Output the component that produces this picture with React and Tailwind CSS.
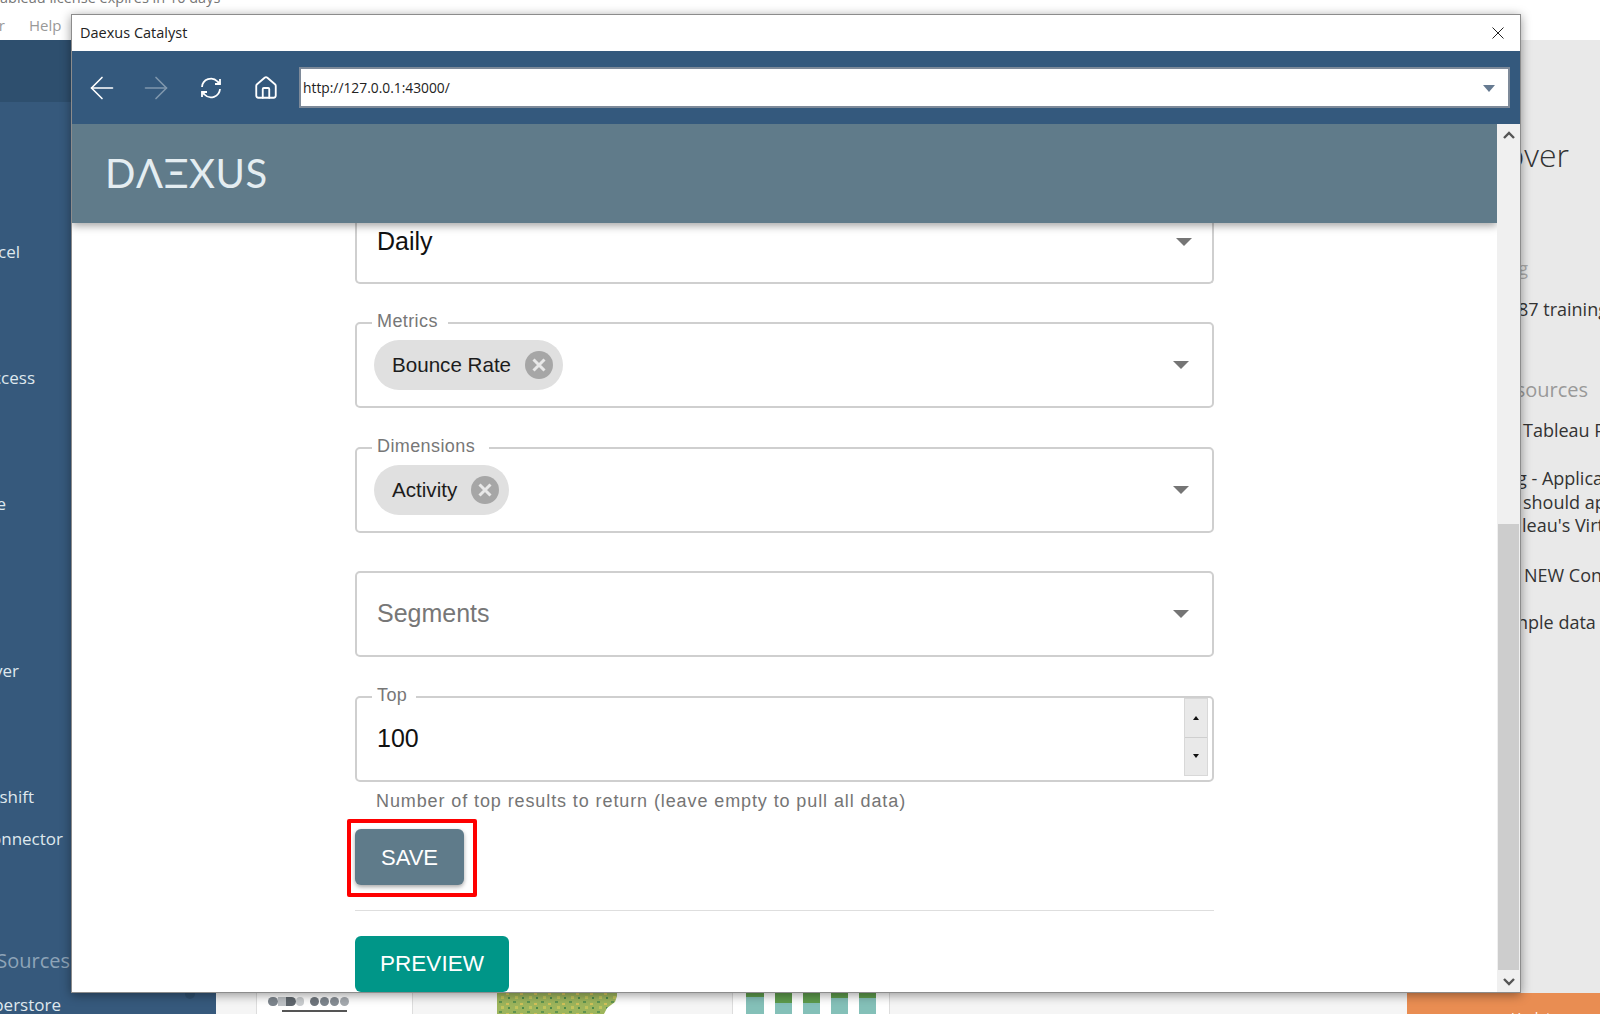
import { ArrowLeft, ArrowRight, House } from "lucide-react";

function Caret() {
  return (
    <svg width="16" height="8" viewBox="0 0 16 8">
      <path d="M0 0h16L8 8z" fill="#757575" />
    </svg>
  );
}

function Chip({ label }) {
  return (
    <div className="flex h-[50px] items-center rounded-full bg-[#e0e0e0] pl-[18px] pr-[10px] text-[20.6px] text-[#1c1c1c]">
      <span>{label}</span>
      <span className="ml-[14px] flex h-[28px] w-[28px] items-center justify-center rounded-full bg-[#a6a6a6]">
        <svg width="16" height="16" viewBox="0 0 16 16">
          <path d="M2.5 2.5l11 11M13.5 2.5l-11 11" stroke="#e8e8e8" strokeWidth="3" />
        </svg>
      </span>
    </div>
  );
}

function Field({ label, children, labelWidth, className }) {
  return (
    <div className={`relative flex h-[86px] items-center rounded-[5px] border-2 border-[#cfcfcf] pl-[17px] ${className}`}>
      {label && (
        <span className={`absolute left-[15px] top-[-14px] bg-white pl-[5px] text-[18px] leading-[22px] tracking-[0.4px] text-[#777] ${labelWidth}`}>
          {label}
        </span>
      )}
      {children}
    </div>
  );
}

function Backdrop() {
  return (
    <div className="absolute inset-0 overflow-hidden whitespace-nowrap bg-white font-['Open_Sans',sans-serif]">
      {/* top strip */}
      <p className="absolute left-[-8px] top-[-13px] text-[14.5px] text-[#777]">Tableau license expires in 10 days</p>
      <span className="absolute left-[-40px] top-[14px] text-[15px] text-[#999]">Server</span>
      <span className="absolute left-[29px] top-[14px] text-[15px] text-[#999]">Help</span>

      {/* left sidebar */}
      <div className="absolute bottom-0 left-0 top-[40px] w-[216px] bg-[#36597c]">
        <div className="h-[62px] bg-[#2e4f6e]" />
      </div>
      <div className="absolute left-0 top-[40px] h-[974px] w-[216px] text-[17px] text-[#dfe8ee]">
        <span className="absolute right-[196px] top-[199px]">Excel</span>
        <span className="absolute right-[181px] top-[325px]">Access</span>
        <span className="absolute right-[210px] top-[451px]">e</span>
        <span className="absolute right-[197px] top-[618px]">Server</span>
        <span className="absolute right-[182px] top-[744px]">Redshift</span>
        <span className="absolute right-[153px] top-[786px]">Connector</span>
        <span className="absolute right-[146px] top-[906px] text-[20px] text-[#8ea4b8]">Data Sources</span>
        <span className="absolute right-[155px] top-[952px]">Superstore</span>
        <span className="absolute left-[185px] top-[949px] h-[10px] w-[10px] rounded-full bg-[#2e4f6e]" />
      </div>

      {/* right panel */}
      <div className="absolute bottom-0 left-[216px] right-0 top-[40px] bg-[#f5f5f5]" />
      <div className="absolute bottom-0 left-[1470px] right-0 top-[40px] bg-[#e9e9e9] text-[18px] text-[#333]">
        <span className="absolute right-[31px] top-[91px] text-[32px] font-light">Discover</span>
        <span className="absolute right-[72px] top-[215px] text-[#aaa]">Training</span>
        <span className="absolute left-[48px] top-[256px]">87 training videos</span>
        <span className="absolute right-[12px] top-[335px] text-[20px] text-[#999]">Resources</span>
        <span className="absolute left-[53px] top-[377px]">Tableau Public</span>
        <span className="absolute left-[47px] top-[425px]">g - Application</span>
        <span className="absolute left-[53px] top-[449px]">should apply</span>
        <span className="absolute left-[52px] top-[472px]">leau's Virtual</span>
        <span className="absolute left-[54px] top-[522px]">NEW Connector</span>
        <span className="absolute left-[47px] top-[569px]">nple data</span>
      </div>

      {/* dashboard thumbnails under the window */}
      <div className="absolute left-[256px] top-[980px] h-[40px] w-[157px] border-x border-[#ddd] bg-white">
        <div className="mt-[17px] flex items-center pl-[11px]">
          <span className="h-[9px] w-[10px] rounded-full bg-[#7d858d]" />
          <span className="h-[9px] w-[8px] bg-[#bdc1c5]" />
          <span className="h-[9px] w-[10px] rounded-r-full bg-[#5f666d]" />
          <span className="h-[9px] w-[8px] rounded-full bg-[#c9cccf]" />
          <span className="ml-[6px] h-[9px] w-[9px] rounded-full bg-[#6f767d]" />
          <span className="ml-[1px] h-[9px] w-[9px] rounded-full bg-[#7d858d]" />
          <span className="ml-[1px] h-[9px] w-[9px] rounded-full bg-[#868d94]" />
          <span className="ml-[1px] h-[9px] w-[9px] rounded-full bg-[#a5aaaf]" />
        </div>
        <div className="ml-[25px] mt-[4px] h-[2px] w-[65px] bg-[#555]" />
      </div>
      <div className="absolute left-[497px] top-[980px] h-[40px] w-[153px] bg-white">
        <svg width="120" height="40" viewBox="0 0 120 40">
          <defs>
            <pattern id="speckle" width="14" height="10" patternUnits="userSpaceOnUse">
              <rect width="14" height="10" fill="#9db55c" />
              <rect x="2" y="1" width="3" height="2" fill="#5f9450" />
              <rect x="9" y="3" width="3" height="2" fill="#d3c25a" />
              <rect x="4" y="6" width="3" height="3" fill="#c2c45c" />
              <rect x="11" y="7" width="2" height="2" fill="#4f8a4a" />
            </pattern>
          </defs>
          <path d="M0 0h120v16l-2 6-8 6-6 12H0z" fill="url(#speckle)" />
        </svg>
      </div>
      <div className="absolute left-[732px] top-[980px] flex h-[40px] w-[158px] gap-[11px] border-x border-[#ddd] bg-white pl-[13px]">
        <div className="w-[18px] bg-[#84c0b8]"><div className="h-[17px] bg-[#5d9b4c]" /></div>
        <div className="w-[17px] bg-[#84c0b8]"><div className="h-[23px] bg-[#5d9b4c]" /></div>
        <div className="w-[17px] bg-[#84c0b8]"><div className="h-[23px] bg-[#5d9b4c]" /></div>
        <div className="w-[17px] bg-[#84c0b8]"><div className="h-[18px] bg-[#5d9b4c]" /></div>
        <div className="w-[17px] bg-[#84c0b8]"><div className="h-[18px] bg-[#5d9b4c]" /></div>
      </div>
      <div className="absolute bottom-0 left-[1407px] right-0 h-[21px] bg-[#e98d52]">
        <span className="absolute left-[104px] top-[14px] text-[14px] text-white">Update</span>
      </div>
    </div>
  );
}

export default function App() {
  return (
    <div className="relative h-[1014px] w-[1600px] overflow-hidden font-['Liberation_Sans',Arial,sans-serif]">
      <Backdrop />

      {/* browser window */}
      <div className="absolute left-[71px] top-[14px] flex h-[979px] w-[1450px] flex-col border border-[#8c8c8c] bg-white shadow-[0_2px_10px_rgba(0,0,0,0.4)]">
        <div className="flex h-[36px] shrink-0 items-center justify-between pb-[1px] pl-[8px] pr-[16px] font-['Open_Sans',sans-serif] text-[14.5px] text-[#222]">
          <span>Daexus Catalyst</span>
          <svg width="12" height="12" viewBox="0 0 12 12">
            <path d="M.5.5l11 11M11.5.5l-11 11" stroke="#222" strokeWidth="1" />
          </svg>
        </div>

        <div className="flex h-[73px] shrink-0 items-center bg-[#34597d] pl-[12px] pr-[10px]">
          <ArrowLeft size={36} strokeWidth={1.1} className="text-white" />
          <ArrowRight size={36} strokeWidth={1.1} className="ml-[18px] text-[#7f97ad]" />
          <svg width="24" height="24" viewBox="0 0 24 24" fill="none" stroke="white" strokeWidth="1.8" className="ml-[25px]">
            <path d="M3 11a9 9 0 0 1 15.5-5.5L21 8M21 13a9 9 0 0 1-15.5 5.5L3 16" />
            <path d="M21 3v5h-5M3 21v-5h5" />
          </svg>
          <House size={26} strokeWidth={1.7} className="ml-[30px] text-white" />
          <div className="ml-[20px] flex h-[41px] flex-1 items-center justify-between border-2 border-[#7e8a99] bg-white pl-[2px] pr-[13px] pt-[1px] font-['Open_Sans',sans-serif] text-[13.8px] text-[#222]">
            <span>http://127.0.0.1:43000/</span>
            <svg width="12" height="7" viewBox="0 0 12 7">
              <path d="M0 0h12L6 7z" fill="#667a91" />
            </svg>
          </div>
        </div>

        <div className="flex min-h-0 flex-1">
          <div className="flex min-w-0 flex-1 flex-col overflow-hidden">
            <header className="relative z-10 flex h-[99px] shrink-0 items-center bg-[#607b8a] pb-[2px] pl-[33px] shadow-[0_3px_8px_rgba(0,0,0,0.35)]">
              <span className="font-['Lato',sans-serif] text-[40px] font-normal tracking-[0.6px] text-[#e4edf1]">DΛΞXUS</span>
            </header>

            <div className="ml-[283px] flex w-[859px] flex-col">
              <div className="flex h-[61px] items-center justify-between rounded-b-[5px] border-2 border-t-0 border-[#cfcfcf] pb-[21px] pl-[20px] pr-[20px] text-[25px] text-[#111]">
                <span>Daily</span>
                <Caret />
              </div>

              <Field label="Metrics" labelWidth="w-[76px]" className="mt-[38px] justify-between pr-[23px]">
                <Chip label="Bounce Rate" />
                <Caret />
              </Field>
              <Field label="Dimensions" labelWidth="w-[117px]" className="mt-[39px] justify-between pr-[23px]">
                <Chip label="Activity" />
                <Caret />
              </Field>
              <Field className="mt-[38px] justify-between pr-[23px]">
                <span className="pl-[3px] text-[25px] text-[#777]">Segments</span>
                <Caret />
              </Field>
              <Field label="Top" labelWidth="w-[44px]" className="mt-[39px] justify-between pr-[4px]">
                <span className="pl-[3px] text-[25px] text-[#111]">100</span>
                <div className="flex h-[78px] w-[24px] flex-col self-start border border-[#d8d8d8] bg-[#e9e9e9]">
                  <div className="flex flex-1 items-center justify-center border-b border-[#cfcfcf]">
                    <svg width="6" height="4" viewBox="0 0 6 4"><path d="M3 0l3 4H0z" fill="#111" /></svg>
                  </div>
                  <div className="flex flex-1 items-center justify-center">
                    <svg width="6" height="4" viewBox="0 0 6 4"><path d="M0 0h6L3 4z" fill="#111" /></svg>
                  </div>
                </div>
              </Field>

              <p className="ml-[21px] mt-[8px] text-[18px] leading-[22px] tracking-[0.9px] text-[#757575]">
                Number of top results to return (leave empty to pull all data)
              </p>

              <div className="relative mt-[17px] h-[56px] w-[109px]">
                <button className="flex h-full w-full items-center justify-center rounded-[6px] bg-[#5f7b8a] text-[22px] text-white shadow-[0_2px_4px_rgba(0,0,0,0.35)]">
                  SAVE
                </button>
                <div className="absolute left-[-8px] top-[-10px] h-[78px] w-[130px] rounded-[2px] border-[4px] border-[#fe0000]" />
              </div>

              <hr className="mt-[25px] border-[#dedede]" />

              <button className="mt-[25px] flex h-[56px] w-[154px] items-center justify-center rounded-[6px] bg-[#009688] text-[22.5px] text-white">
                PREVIEW
              </button>
            </div>
          </div>

          {/* scrollbar */}
          <div className="flex w-[23px] shrink-0 flex-col items-center bg-[#f0f0f0]">
            <svg width="12" height="8" viewBox="0 0 12 8" className="mt-[7px]">
              <path d="M1 7l5-5 5 5" fill="none" stroke="#555" strokeWidth="2.4" />
            </svg>
            <div className="mt-[385px] h-[446px] w-[21px] bg-[#cdcdcd]" />
            <svg width="12" height="8" viewBox="0 0 12 8" className="mt-[8px]">
              <path d="M1 1l5 5 5-5" fill="none" stroke="#555" strokeWidth="2.4" />
            </svg>
          </div>
        </div>
      </div>
    </div>
  );
}
